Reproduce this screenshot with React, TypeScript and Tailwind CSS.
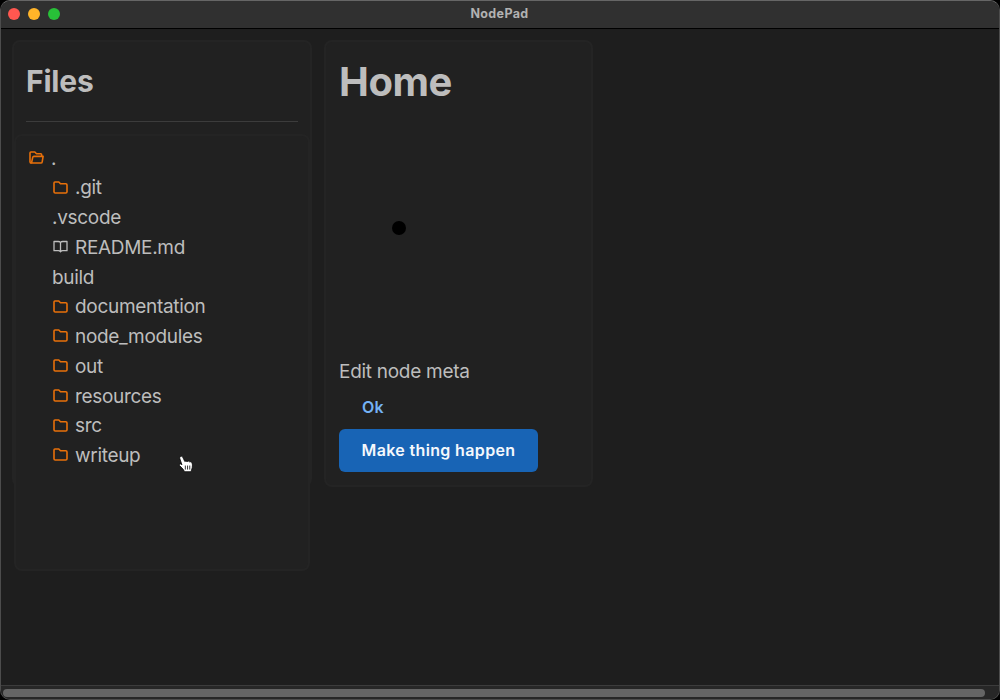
import type { ReactNode } from 'react';

type Kind = 'folder' | 'book' | 'none';

const files: { name: string; kind: Kind }[] = [
  { name: '.git', kind: 'folder' },
  { name: '.vscode', kind: 'none' },
  { name: 'README.md', kind: 'book' },
  { name: 'build', kind: 'none' },
  { name: 'documentation', kind: 'folder' },
  { name: 'node_modules', kind: 'folder' },
  { name: 'out', kind: 'folder' },
  { name: 'resources', kind: 'folder' },
  { name: 'src', kind: 'folder' },
  { name: 'writeup', kind: 'folder' },
];

function Glyph({ children, className }: { children: ReactNode; className: string }) {
  return (
    <svg
      width="15"
      height="13"
      viewBox="0 0 15 13"
      fill="none"
      stroke="currentColor"
      strokeWidth="1.6"
      strokeLinejoin="round"
      strokeLinecap="round"
      className={`mb-[3px] ml-px mr-[7px] shrink-0 ${className}`}
    >
      {children}
    </svg>
  );
}

function FolderIcon() {
  return (
    <Glyph className="text-[#e8700a]">
      <path d="M1 1.9v8.9q0 1.2 1.2 1.2h10.6q1.2 0 1.2-1.2V4q0-1.2-1.2-1.2H7.5L5.8 1H1.9Q1 1 1 1.9z" />
    </Glyph>
  );
}

function FolderOpenIcon() {
  return (
    <Glyph className="text-[#e8700a]">
      <path d="M2 12q-1 0-1-1.2V1.9Q1 1 1.9 1h3.9l1.7 1.8h4.2q1 0 1 1.2v1.2" />
      <path d="M2 12h9.9q1.1 0 1.3-1.2l.9-5.4H4.9q-1 0-1.2 1l-1 4.8Q2.5 12 2 12z" />
    </Glyph>
  );
}

function BookIcon() {
  return (
    <Glyph className="text-[#bdbdbd]">
      <path strokeWidth="1.3" d="M7.5 2.4Q6.6 1.5 5.3 1.5H1v9.2h4.3q1.3 0 2.2 1 .9-1 2.2-1H14V1.5H9.7Q8.4 1.5 7.5 2.4zM7.5 2.4v9.3" />
    </Glyph>
  );
}

function HandCursor() {
  return (
    <svg className="absolute left-[177px] top-[454px]" width="17" height="19" viewBox="0 0 16 18">
      <path
        d="M2.1 1.5Q3.6.5 4.5 2.2L6.4 6.2Q7.5 5.2 8.5 6.3 9.8 5.2 10.8 6.5 12.6 5.8 13.2 7.5 14 9.1 13.4 12l-1.1 3.8H6.2L4.9 13.6 1.2 9.8Q.8 8.2 2.6 8.5l1.1.8L1.7 3.5Q1.4 2.2 2.1 1.5z"
        fill="#fff"
        stroke="#000"
        strokeWidth=".7"
        strokeLinejoin="round"
      />
      <path d="M6.9 10v3.8M9 10v3.8M11.1 10v3.8" stroke="#111" strokeWidth=".8" />
    </svg>
  );
}

export default function App() {
  return (
    <div className="h-[700px] w-[1000px] overflow-hidden bg-black font-['Inter',sans-serif] text-[#bdbdbd]">
      <div className="relative flex h-full flex-col overflow-hidden rounded-[10px] border border-[#4c4c4c] border-t-[#666] bg-[#1e1e1e]">
        <header className="flex h-7 shrink-0 items-center border-b border-black bg-[#303030] px-[7px]">
          <div className="flex w-[60px] gap-2 pb-px">
            <span className="size-3 rounded-full bg-[#ff5750]" />
            <span className="size-3 rounded-full bg-[#ffb429]" />
            <span className="size-3 rounded-full bg-[#28c138]" />
          </div>
          <h1 className="flex-1 pr-[61px] text-center text-[12.5px] font-bold tracking-[0.35px] text-[#b2b2b2]">NodePad</h1>
        </header>

        <main className="flex flex-1 items-start gap-3 pl-[11px] pt-[11px]">
          <section className="h-[447px] w-[300px] rounded-lg border-2 border-[#242424] bg-[#212121]">
            <h2 className="ml-3 mt-[17px] text-[30px] font-bold leading-[44px] tracking-[-0.2px]">Files</h2>
            <div className="mx-3 mt-[18px] h-px bg-[#3c3c3c]" />
            <div className="mt-3 h-[437px] w-[296px] rounded-lg border-2 border-[#242424] bg-[#212121] pl-3 pt-2 text-[19px] tracking-[-0.31px]">
              <div className="flex h-[29.75px] items-center">
                <FolderOpenIcon />
                <span>.</span>
              </div>
              <ul className="pl-6">
                {files.map((f) => (
                  <li key={f.name} className="flex h-[29.75px] items-center whitespace-nowrap">
                    {f.kind === 'folder' && <FolderIcon />}
                    {f.kind === 'book' && <BookIcon />}
                    <span>{f.name}</span>
                  </li>
                ))}
              </ul>
            </div>
          </section>

          <section className="h-[447px] w-[269px] rounded-lg border-2 border-[#242424] bg-[#212121] pl-[13px]">
            <h2 className="mt-[15px] text-[40px] font-bold leading-[50px] tracking-[-0.5px]">Home</h2>
            <svg className="block" width="240" height="250" viewBox="0 0 240 250">
              <circle cx="60" cy="121" r="7" fill="#000" />
            </svg>
            <p className="text-[19px] leading-[30px] tracking-[-0.28px]">Edit node meta</p>
            <button className="ml-[23px] mt-[5px] block text-[16px] font-semibold leading-[30px] tracking-[0.3px] text-[#74b2f5]">Ok</button>
            <button className="mt-[7px] block h-[43px] w-[199px] whitespace-nowrap rounded-md bg-[#1864b5] pb-px text-[16px] font-semibold tracking-[0.35px] text-[#f4f8fc]">
              Make thing happen
            </button>
          </section>
        </main>

        <footer className="flex h-[14px] shrink-0 items-center border-t border-[#3c3c3c] bg-[#272727] pl-[2px] pt-px">
          <div className="h-2 w-[982px] rounded-full bg-[#656565]" />
        </footer>
        <HandCursor />
      </div>
    </div>
  );
}
